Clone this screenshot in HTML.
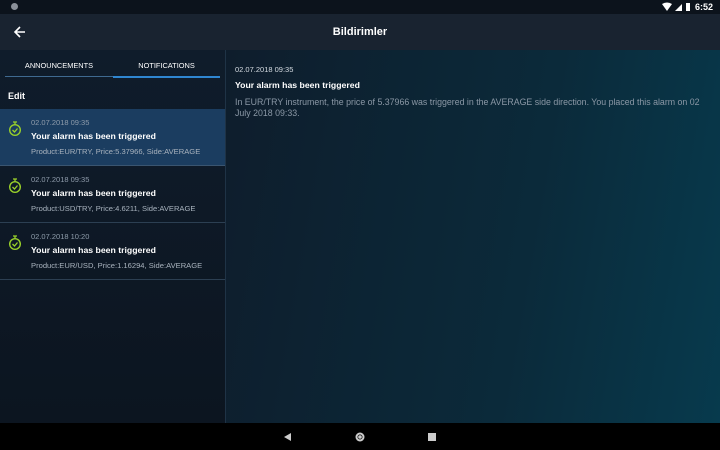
<!DOCTYPE html>
<html><head><style>
*{margin:0;padding:0;box-sizing:border-box}
body{width:720px;height:450px;overflow:hidden;font-family:"Liberation Sans",sans-serif;background:#0d1622;position:relative;color:#fff}
.sb{position:absolute;left:0;top:0;width:720px;height:14px;background:#0c131c}
.ab{position:absolute;left:0;top:14px;width:720px;height:36px;background:#192330}
.left{position:absolute;left:0;top:50px;width:225px;height:373px;background:linear-gradient(180deg,#0f1c2b,#0c1520)}
.right{position:absolute;left:226px;top:50px;width:494px;height:373px;background:linear-gradient(100deg,#0e1d2c 0%,#0b2a3a 60%,#073a4d 100%)}
.div{position:absolute;left:225px;top:50px;width:1px;height:373px;background:#1f3346}
.nav{position:absolute;left:0;top:423px;width:720px;height:27px;background:#000}
.t{position:absolute;white-space:nowrap}
.item{position:absolute;left:0;width:225px;height:57px;border-bottom:1px solid #2c3f52}
.ti{font-size:8.7px;font-weight:bold}
.pr{font-size:7.6px;color:#a9b3be}
.dt{font-size:7.5px;color:#8f9cab}
</style></head><body>
<div class="sb"></div>
<div style="position:absolute;left:11px;top:3px;width:7px;height:7px;border-radius:50%;background:#8a9099"></div>
<svg style="position:absolute;left:662px;top:2px" width="40" height="10"><path d="M0 2 Q5 -1 10 2 L5 9Z" fill="#fff"/><path d="M13 9 L20 2 L20 9Z" fill="#fff"/><rect x="24" y="1" width="4" height="8" fill="#fff"/></svg>
<div class="t" style="left:695px;top:2px;font-size:9px;font-weight:bold">6:52</div>
<div class="ab"></div>
<svg style="position:absolute;left:13px;top:25px" width="14" height="14"><path d="M12 7H2M7 2L2 7L7 12" stroke="#fff" stroke-width="1.6" fill="none"/></svg>
<div class="t" style="left:0;width:720px;text-align:center;top:26px;font-size:11px;font-weight:bold">Bildirimler</div>
<div class="left"></div>
<div class="right"></div>
<div class="div"></div>
<div class="t" style="left:5px;width:108px;text-align:center;top:61px;font-size:7.4px">ANNOUNCEMENTS</div>
<div class="t" style="left:113px;width:107px;text-align:center;top:61px;font-size:7.4px">NOTIFICATIONS</div>
<div style="position:absolute;left:5px;top:76px;width:108px;height:1px;background:#3f6a90"></div>
<div style="position:absolute;left:113px;top:76px;width:107px;height:2px;background:#2f86d0"></div>
<div class="t" style="left:8px;top:91px;font-size:9px;font-weight:bold">Edit</div>

<div class="item" style="top:109px;background:#1b3d60;border-bottom-color:#3a5570"></div>
<div class="item" style="top:166px"></div>
<div class="item" style="top:223px"></div>

<svg style="position:absolute;left:8px;top:121px" width="14" height="16"><path d="M5 1h4M7 1v2" stroke="#9ad12a" stroke-width="1.3"/><circle cx="7" cy="9" r="5.3" stroke="#9ad12a" stroke-width="1.4" fill="none"/><path d="M4.5 9l2 2 3-3.5" stroke="#9ad12a" stroke-width="1.3" fill="none"/></svg>
<svg style="position:absolute;left:8px;top:178px" width="14" height="16"><path d="M5 1h4M7 1v2" stroke="#9ad12a" stroke-width="1.3"/><circle cx="7" cy="9" r="5.3" stroke="#9ad12a" stroke-width="1.4" fill="none"/><path d="M4.5 9l2 2 3-3.5" stroke="#9ad12a" stroke-width="1.3" fill="none"/></svg>
<svg style="position:absolute;left:8px;top:235px" width="14" height="16"><path d="M5 1h4M7 1v2" stroke="#9ad12a" stroke-width="1.3"/><circle cx="7" cy="9" r="5.3" stroke="#9ad12a" stroke-width="1.4" fill="none"/><path d="M4.5 9l2 2 3-3.5" stroke="#9ad12a" stroke-width="1.3" fill="none"/></svg>

<div class="t dt" style="left:31px;top:118px">02.07.2018 09:35</div>
<div class="t ti" style="left:31px;top:131px">Your alarm has been triggered</div>
<div class="t pr" style="left:31px;top:147px">Product:EUR/TRY, Price:5.37966, Side:AVERAGE</div>

<div class="t dt" style="left:31px;top:175px">02.07.2018 09:35</div>
<div class="t ti" style="left:31px;top:188px">Your alarm has been triggered</div>
<div class="t pr" style="left:31px;top:204px">Product:USD/TRY, Price:4.6211, Side:AVERAGE</div>

<div class="t dt" style="left:31px;top:232px">02.07.2018 10:20</div>
<div class="t ti" style="left:31px;top:245px">Your alarm has been triggered</div>
<div class="t pr" style="left:31px;top:261px">Product:EUR/USD, Price:1.16294, Side:AVERAGE</div>

<div class="t" style="left:235px;top:65px;font-size:7.5px;color:#d5dbe1">02.07.2018 09:35</div>
<div class="t ti" style="left:235px;top:80px">Your alarm has been triggered</div>
<div style="position:absolute;left:235px;top:97px;width:484px;font-size:8.8px;line-height:11px;color:#8b98a6;white-space:nowrap">In EUR/TRY instrument, the price of 5.37966 was triggered in the AVERAGE side direction. You placed this alarm on 02<br>July 2018 09:33.</div>

<div class="nav"></div>
<svg style="position:absolute;left:282px;top:431px" width="160" height="12"><path d="M2 6L9 2V10Z" fill="#ccc"/><circle cx="78" cy="6" r="4.5" fill="#ccc"/><circle cx="78" cy="6" r="2.5" fill="#000"/><circle cx="78" cy="6" r="1.8" fill="#ccc"/><rect x="146" y="2" width="8" height="8" fill="#ccc"/></svg>
</body></html>
